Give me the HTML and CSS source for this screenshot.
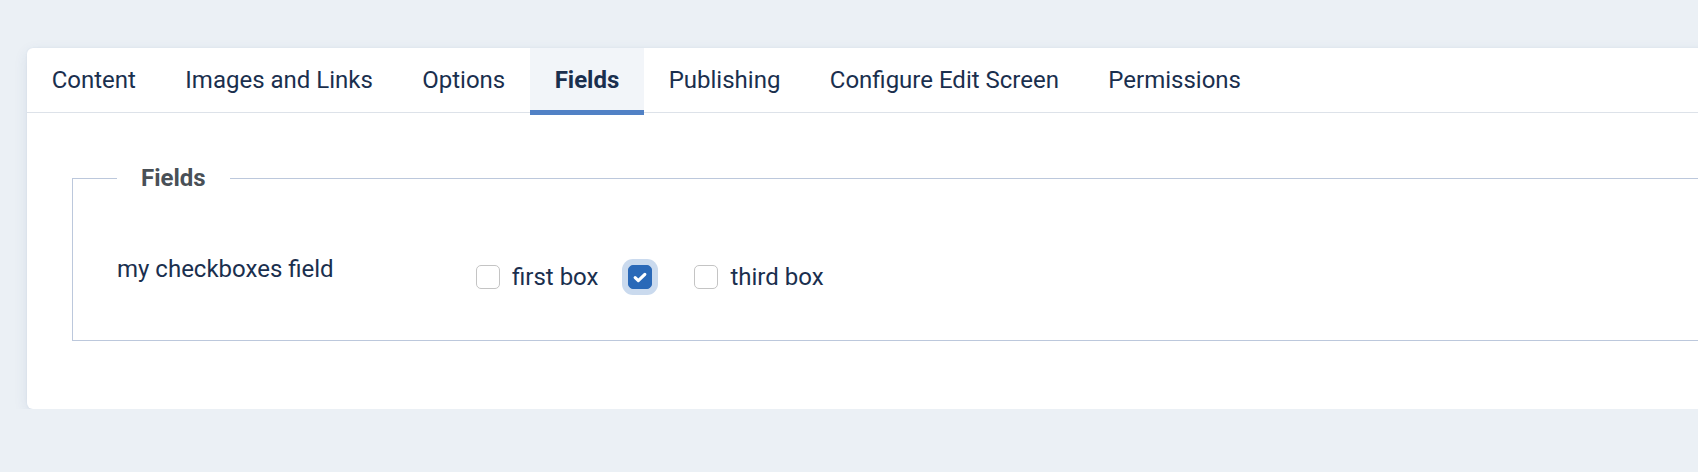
FILE: index.html
```html
<!DOCTYPE html>
<html lang="en">
<head>
    <meta charset="UTF-8">
    <title>Edit Article - Fields</title>
    <link rel="stylesheet" href="styles.css">
</head>
<body>
<div class="card">
    <div class="tabs">
        <div class="tab">Content</div>
        <div class="tab">Images and Links</div>
        <div class="tab">Options</div>
        <div class="tab active">Fields</div>
        <div class="tab">Publishing</div>
        <div class="tab">Configure Edit Screen</div>
        <div class="tab">Permissions</div>
    </div>

    <div class="tab-body">
        <fieldset class="options">
            <legend>Fields</legend>
            <div class="control-group">
                <div class="control-label">my checkboxes field</div>
                <div class="controls">
                    <label class="check-item">
                        <span class="box"></span>
                        <span class="check-text">first box</span>
                    </label>
                    <label class="check-item">
                        <span class="box checked focus">
                            <svg width="18" height="18" viewBox="0 0 16 16">
                                <path d="M3.7 8.6l2.8 2.6 5.8-5.6" fill="none" stroke="#fff" stroke-width="2.8" stroke-linecap="round" stroke-linejoin="round"/>
                            </svg>
                        </span>
                        <span class="check-text"></span>
                    </label>
                    <label class="check-item">
                        <span class="box"></span>
                        <span class="check-text">third box</span>
                    </label>
                </div>
            </div>
        </fieldset>
    </div>
</div>
</body>
</html>
```

FILE: styles.css
```css
body {
    margin: 0;
    background-color: #ebf0f5;
    font-family: Roboto, "Liberation Sans", sans-serif;
    color: #1a2f4e;
    overflow: hidden;
}

.card {
    margin: 48px -80px 0 27px;
    background-color: #fff;
    border-radius: 6px;
    box-shadow: 0 4px 14px rgba(40, 80, 140, 0.1), 0 0 2px rgba(40, 80, 140, 0.08);
}

.tabs {
    display: flex;
    border-bottom: 1px solid #dde2e9;
}

.tab {
    position: relative;
    padding: 18px 24.7px;
    font-size: 24px;
    line-height: 28px;
    color: #1a2f4e;
}

.tab.active {
    background-color: #f2f5f9;
    font-weight: bold;
}

.tab.active::after {
    content: "";
    position: absolute;
    left: 0;
    right: 0;
    bottom: -3px;
    height: 5px;
    background-color: #5181c5;
}

.tab-body {
    padding: 51px 45px 68px 45px;
}

.options {
    margin: 0;
    padding: 62px 44px 49px 44px;
    border: 1px solid #bcc8dc;
}

.options legend {
    padding: 0 24px;
    font-size: 24px;
    line-height: 29px;
    font-weight: bold;
    color: #495057;
}

.control-group {
    display: flex;
    align-items: flex-start;
}

.control-label {
    width: 359px;
    font-size: 24px;
    line-height: 28px;
}

.controls {
    display: flex;
    align-items: center;
    margin-top: 8px;
}

.check-item {
    display: flex;
    align-items: center;
    gap: 12px;
    margin-right: 30px;
}

.box {
    box-sizing: border-box;
    width: 24px;
    height: 24px;
    border: 1.5px solid #c4c4c4;
    border-radius: 5px;
    background-color: #fff;
    display: flex;
    align-items: center;
    justify-content: center;
}

.box.checked {
    border-color: #2a69b8;
    background-color: #2a69b8;
}

.box.focus {
    box-shadow: 0 0 0 6px #cadaee;
}

.check-text {
    font-size: 24px;
    line-height: 28px;
}
```
